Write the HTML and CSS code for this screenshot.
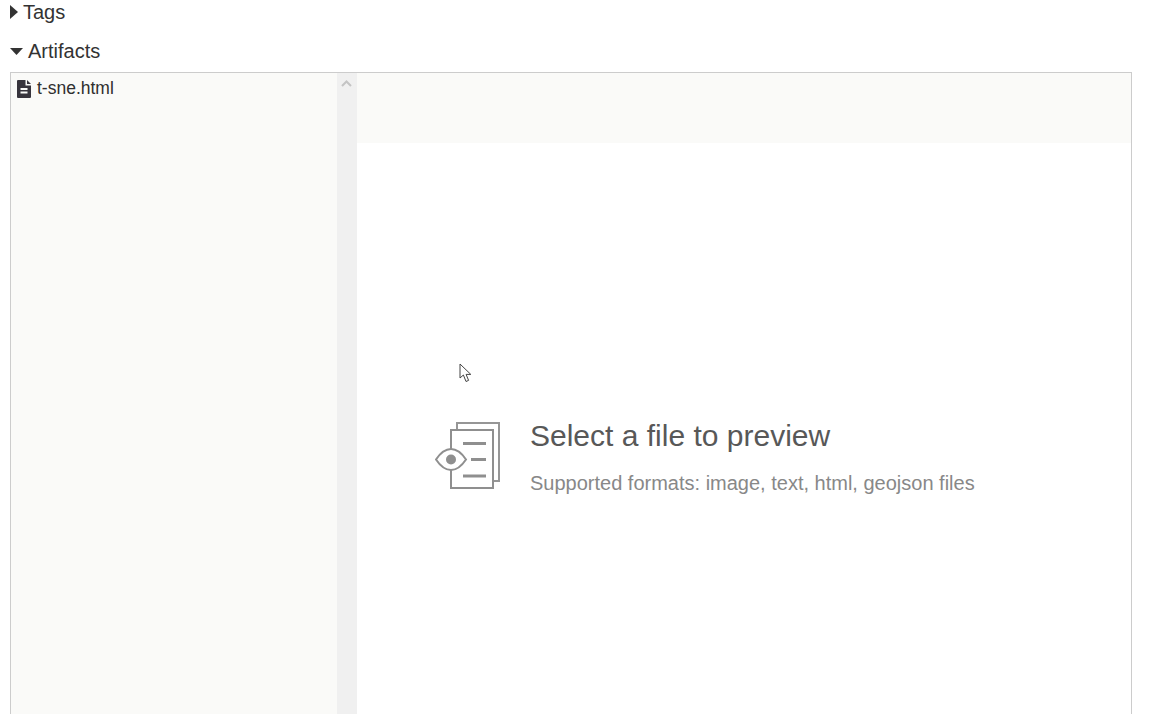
FILE: index.html
```html
<!DOCTYPE html>
<html lang="en">
<head>
  <meta charset="UTF-8">
  <title>Artifacts</title>
  <link rel="stylesheet" href="styles.css">
</head>
<body>
  <div class="section-title">
    <svg class="caret" width="8" height="14" viewBox="0 0 8 14"><path d="M0 0 L8 7 L0 14 Z"/></svg>
    <span>Tags</span>
  </div>
  <div class="section-title open">
    <svg class="caret" width="13" height="7" viewBox="0 0 13 7"><path d="M0 0 H13 L6.5 7 Z"/></svg>
    <span>Artifacts</span>
  </div>

  <div class="artifacts">
    <div class="tree">
      <div class="tree-item">
        <svg class="file-icon" width="14" height="18" viewBox="0 0 14 18">
          <path fill-rule="evenodd" d="M0 1 Q0 0 1 0 H8.5 V5.5 H14 V17 Q14 18 13 18 H1 Q0 18 0 17 Z M3.5 8 V10 H10.5 V8 Z M3.5 11.5 V13.5 H10.5 V11.5 Z"/>
          <path d="M10 0 L14 4 H10 Z"/>
        </svg>
        <span>t-sne.html</span>
      </div>
    </div>
    <div class="scrollbar">
      <svg class="scroll-up" width="11" height="7" viewBox="0 0 11 7"><path d="M1 6 L5.5 1.5 L10 6" fill="none" stroke="#c4c4c4" stroke-width="2"/></svg>
    </div>
    <div class="preview">
      <div class="preview-head"></div>
      <div class="preview-body">
        <svg class="preview-icon" width="66" height="68" viewBox="0 0 66 68" fill="none" stroke="#8f8f8f" stroke-width="2">
          <path d="M22 8 V1 H64 V59 H58" stroke="#969696"/>
          <path d="M16 28 V8 H58 V66 H16 V47"/>
          <path d="M1 37.5 Q8 27 16 27 Q24 27 31 37.5 Q24 48 16 48 Q8 48 1 37.5 Z"/>
          <circle cx="16" cy="37.5" r="5" fill="#8f8f8f" stroke="none"/>
          <path d="M28 21.5 H51 M36 37.5 H51 M28 54 H51" stroke-width="3"/>
        </svg>
        <div class="preview-text">
          <div class="preview-title">Select a file to preview</div>
          <div class="preview-sub">Supported formats: image, text, html, geojson files</div>
        </div>
      </div>
    </div>
  </div>

  <svg class="cursor" width="14" height="21" viewBox="0 0 14 21">
    <path d="M1 1 V15 L4.4 12 L7 18.5 L9.6 17.4 L7.1 11.4 H11.8 Z" fill="#fff" stroke="#444" stroke-width="1"/>
  </svg>
</body>
</html>
```

FILE: styles.css
```css
html, body {
  height: 100%;
}
body {
  margin: 0;
  height: 714px;
  overflow: hidden;
  position: relative;
  display: flex;
  flex-direction: column;
  font-family: "Liberation Sans", Arial, sans-serif;
  color: #333;
  background: white;
}

.section-title {
  display: flex;
  align-items: center;
  height: 24px;
  padding-left: 10px;
  font-size: 20px;
  gap: 5px;
}
.section-title.open {
  margin-top: 15px;
  gap: 5px;
}
.section-title .caret {
  fill: #333;
}

.artifacts {
  flex: 1;
  display: flex;
  margin: 9px 28px 0 10px;
  border: 1px solid #ccc;
  border-bottom: none;
  min-height: 0;
}

.tree {
  width: 326px;
  background-color: #fafaf8;
}
.tree-item {
  display: flex;
  align-items: center;
  gap: 6px;
  padding: 5px 0 0 6px;
  font-size: 17.5px;
  color: #2f2f2f;
}
.file-icon {
  fill: #37343c;
}

.scrollbar {
  width: 20px;
  background-color: #f0f0f0;
  display: flex;
  justify-content: center;
  align-items: flex-start;
  padding: 7px 2px 0 0;
  box-sizing: border-box;
}

.preview {
  flex: 1;
  display: flex;
  flex-direction: column;
}
.preview-head {
  height: 70px;
  background-color: #fafaf8;
}
.preview-body {
  display: flex;
  align-items: flex-start;
  padding: 279px 0 0 78px;
}
.preview-icon {
  flex: none;
}
.preview-text {
  margin-left: 29px;
  margin-top: -3px;
}
.preview-title {
  font-size: 30px;
  line-height: 34px;
  color: #585858;
}
.preview-sub {
  margin-top: 18px;
  font-size: 20px;
  line-height: 24px;
  color: #888;
}

/* mouse pointer from the capture */
.cursor {
  position: absolute;
  left: 459px;
  top: 363px;
}
```
